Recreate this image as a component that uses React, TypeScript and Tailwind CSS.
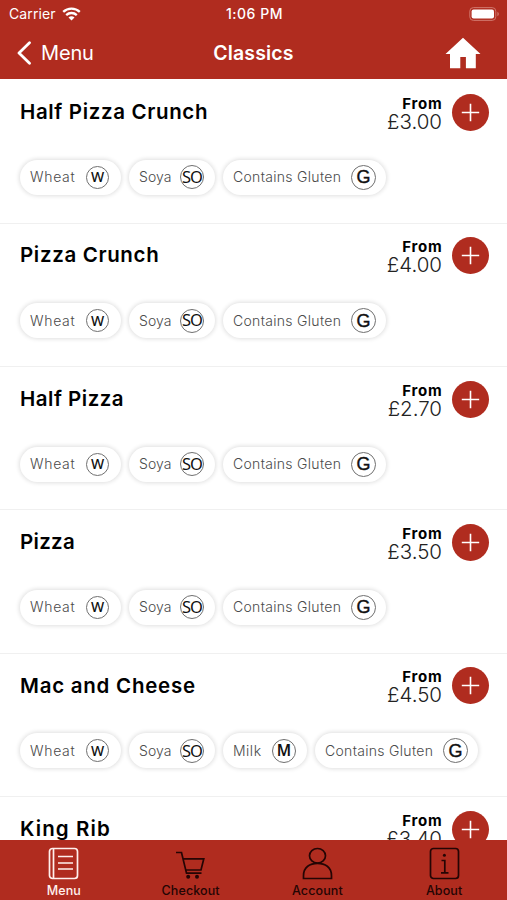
import clsx from "clsx";

type Allergen = "wheat" | "soya" | "milk" | "gluten";

const allergens = {
  wheat: { label: "Wheat", code: "W", pill: "w-[101px]", text: "tracking-[0.7px]", badge: "size-[23px] mr-[12px] text-[14px] font-['Noto_Sans',sans-serif] font-medium" },
  soya: { label: "Soya", code: "SO", pill: "w-[86px]", text: "tracking-[0.1px]", badge: "size-[24px] mr-[11px] text-[16.5px] tracking-[-1px] font-['Noto_Sans',sans-serif]" },
  milk: { label: "Milk", code: "M", pill: "w-[84px]", text: "tracking-[0.5px]", badge: "size-[24px] mr-[11px] text-[15.5px] font-['Noto_Sans',sans-serif] font-semibold" },
  gluten: { label: "Contains Gluten", code: "G", pill: "w-[163px]", text: "tracking-[0.3px]", badge: "size-[25px] mr-[10px] text-[18px] font-['Liberation_Sans',sans-serif] [-webkit-text-stroke:0.4px]" },
};

const items: { name: string; price: string; tracking: string; tags: Allergen[] }[] = [
  { name: "Half Pizza Crunch", price: "£3.00", tracking: "tracking-[0.65px]", tags: ["wheat", "soya", "gluten"] },
  { name: "Pizza Crunch", price: "£4.00", tracking: "tracking-[0.65px]", tags: ["wheat", "soya", "gluten"] },
  { name: "Half Pizza", price: "£2.70", tracking: "tracking-[0.5px]", tags: ["wheat", "soya", "gluten"] },
  { name: "Pizza", price: "£3.50", tracking: "tracking-[0.3px]", tags: ["wheat", "soya", "gluten"] },
  { name: "Mac and Cheese", price: "£4.50", tracking: "tracking-[0.75px]", tags: ["wheat", "soya", "milk", "gluten"] },
  { name: "King Rib", price: "£3.40", tracking: "tracking-[1.1px]", tags: [] },
];

function StatusBar() {
  return (
    <div className="grid h-[27px] grid-cols-3 items-center pl-[9px] pr-[7px] text-[14px] leading-none">
      <div className="flex items-center gap-[6px]">
        <span className="tracking-[0.1px]">Carrier</span>
        <svg className="h-[14px] w-[19px]" viewBox="0 0 19 14" fill="none" stroke="currentColor" strokeWidth="2.3">
          <path d="M1.2 4.9C5.8.4 13.2.4 17.8 4.9" />
          <path d="M4.2 8.1c3-2.8 7.6-2.8 10.6 0" />
          <path d="M9.5 13.4 6.5 10.4c1.7-1.5 4.3-1.5 6 0Z" fill="currentColor" stroke="none" />
        </svg>
      </div>
      <span className="text-center text-[14px] font-medium tracking-[0.5px]">1:06 PM</span>
      <svg className="h-[14px] w-[31px] justify-self-end" viewBox="0 0 31 14">
        <rect x=".8" y=".6" width="26" height="12.8" rx="3.6" fill="none" stroke="#d0776c" />
        <rect x="2.6" y="2.4" width="22.4" height="9.2" rx="2" fill="#fff" />
        <path d="M28.4 4.8c2 .8 2 3.6 0 4.4Z" fill="#d0776c" />
      </svg>
    </div>
  );
}

function Header() {
  return (
    <header className="h-[79px] shrink-0 bg-[#b02c1f] text-white">
      <StatusBar />
      <div className="grid h-[52px] grid-cols-3 items-center pl-[17px] pr-[26px]">
        <div className="flex items-center gap-[9px]">
          <svg className="h-6 w-[15px]" viewBox="0 0 15 24" fill="none" stroke="currentColor" strokeWidth="2.8" strokeLinecap="round" strokeLinejoin="round">
            <path d="M12.5 1.8 2 12l10.5 10.2" />
          </svg>
          <span className="text-[20px] leading-none tracking-[-0.15px]">Menu</span>
        </div>
        <h1 className="ml-[9px] mt-px text-center text-[19.5px] leading-none font-semibold tracking-[0.15px]">Classics</h1>
        <svg className="mb-px h-8 w-9 justify-self-end" viewBox="0 0 36 32" fill="currentColor">
          <path d="M18 .7 .5 17H5v14.3h10.3V20h5.6v11.3h9.9V17h4.7Z" />
        </svg>
      </div>
    </header>
  );
}

function Tag({ type }: { type: Allergen }) {
  const { label, code, pill, text, badge } = allergens[type];
  return (
    <div className={clsx("flex h-[35px] shrink-0 items-center justify-between rounded-full bg-white pl-[10px] text-[#4b4b4b] shadow-[0_0_4px_1px_rgba(0,0,0,0.13)]", pill)}>
      <span className={clsx("whitespace-nowrap text-[14px] leading-none font-light", text)}>{label}</span>
      <span className={clsx("flex shrink-0 items-center justify-center rounded-full border border-[#707070] leading-none text-[#111]", badge)}>{code}</span>
    </div>
  );
}

const tabs = [
  {
    label: "Menu",
    active: true,
    icon: (
      <>
        <rect x="1.5" y="1.5" width="28" height="30" rx="3" />
        <path d="M5.5 1.5v30M10 9.5h15M10 16h15M10 22h15" />
      </>
    ),
  },
  {
    label: "Checkout",
    icon: (
      <>
        <path d="M1 5.5h5.5L11.5 26.2h15M7.8 11.8h21L26 23H10.7" />
        <circle cx="13.2" cy="29.8" r="2" fill="currentColor" stroke="none" />
        <circle cx="22" cy="29.8" r="2" fill="currentColor" stroke="none" />
      </>
    ),
  },
  {
    label: "Account",
    icon: (
      <>
        <ellipse cx="15.5" cy="8.8" rx="8" ry="7.3" />
        <path d="M1.5 31.5v-2.8C1.5 20 8 16.3 15.5 16.3S29.5 20 29.5 28.7v2.8Z" />
      </>
    ),
  },
  {
    label: "About",
    icon: (
      <>
        <rect x="1.5" y="1.5" width="28" height="30" rx="3" />
        <path d="M12.5 13.5h3.3v12M12 25.8h7.5" />
        <circle cx="15.4" cy="8.2" r="1.5" fill="currentColor" stroke="none" />
      </>
    ),
  },
];

export default function App() {
  return (
    <div className="flex h-[900px] w-[507px] flex-col overflow-hidden bg-white font-['Inter',sans-serif]">
      <Header />

      {/* Menu items */}
      <main className="min-h-0 flex-1 overflow-hidden pt-[1.3px]">
        {items.map((item) => (
          <article key={item.name} className="h-[143.4px] border-b border-[#f0f0f0] pt-[13px] pl-5 pr-[18px]">
            <div className="flex h-[38px] items-center">
              <h2 className={clsx("flex-1 text-[20.5px] leading-none font-semibold text-black", item.tracking)}>{item.name}</h2>
              <div className="mr-[10px] pt-px text-right">
                <p className="-mr-[0.5px] text-[15px] leading-[17px] font-bold tracking-[0.8px] text-black">From</p>
                <p className="text-[20.5px] leading-[19px] font-light text-[#222]">{item.price}</p>
              </div>
              <button className="flex size-[37px] items-center justify-center rounded-full bg-[#b02c1f]">
                <svg className="size-[19px]" viewBox="0 0 19 19" stroke="#fff" strokeWidth="1.6">
                  <path d="M9.5 .8v17.4M.8 9.5h17.4" />
                </svg>
              </button>
            </div>
            <div className="mt-[28.5px] flex gap-2">
              {item.tags.map((tag) => (
                <Tag key={tag} type={tag} />
              ))}
            </div>
          </article>
        ))}
      </main>

      {/* Bottom tabs */}
      <nav className="grid h-[60px] shrink-0 grid-cols-4 bg-[#b02c1f]">
        {tabs.map((tab) => (
          <a key={tab.label} className={clsx("flex flex-col items-center pt-[7px] pl-px", tab.active ? "text-[#fff0ed]" : "text-[#240504]")}>
            <svg className="h-[34px] w-[31px]" viewBox="0 0 31 34" fill="none" stroke="currentColor" strokeWidth="1.7">
              {tab.icon}
            </svg>
            <span className="mt-1 text-[12.5px] leading-none font-medium tracking-[0.1px]">{tab.label}</span>
          </a>
        ))}
      </nav>
    </div>
  );
}
